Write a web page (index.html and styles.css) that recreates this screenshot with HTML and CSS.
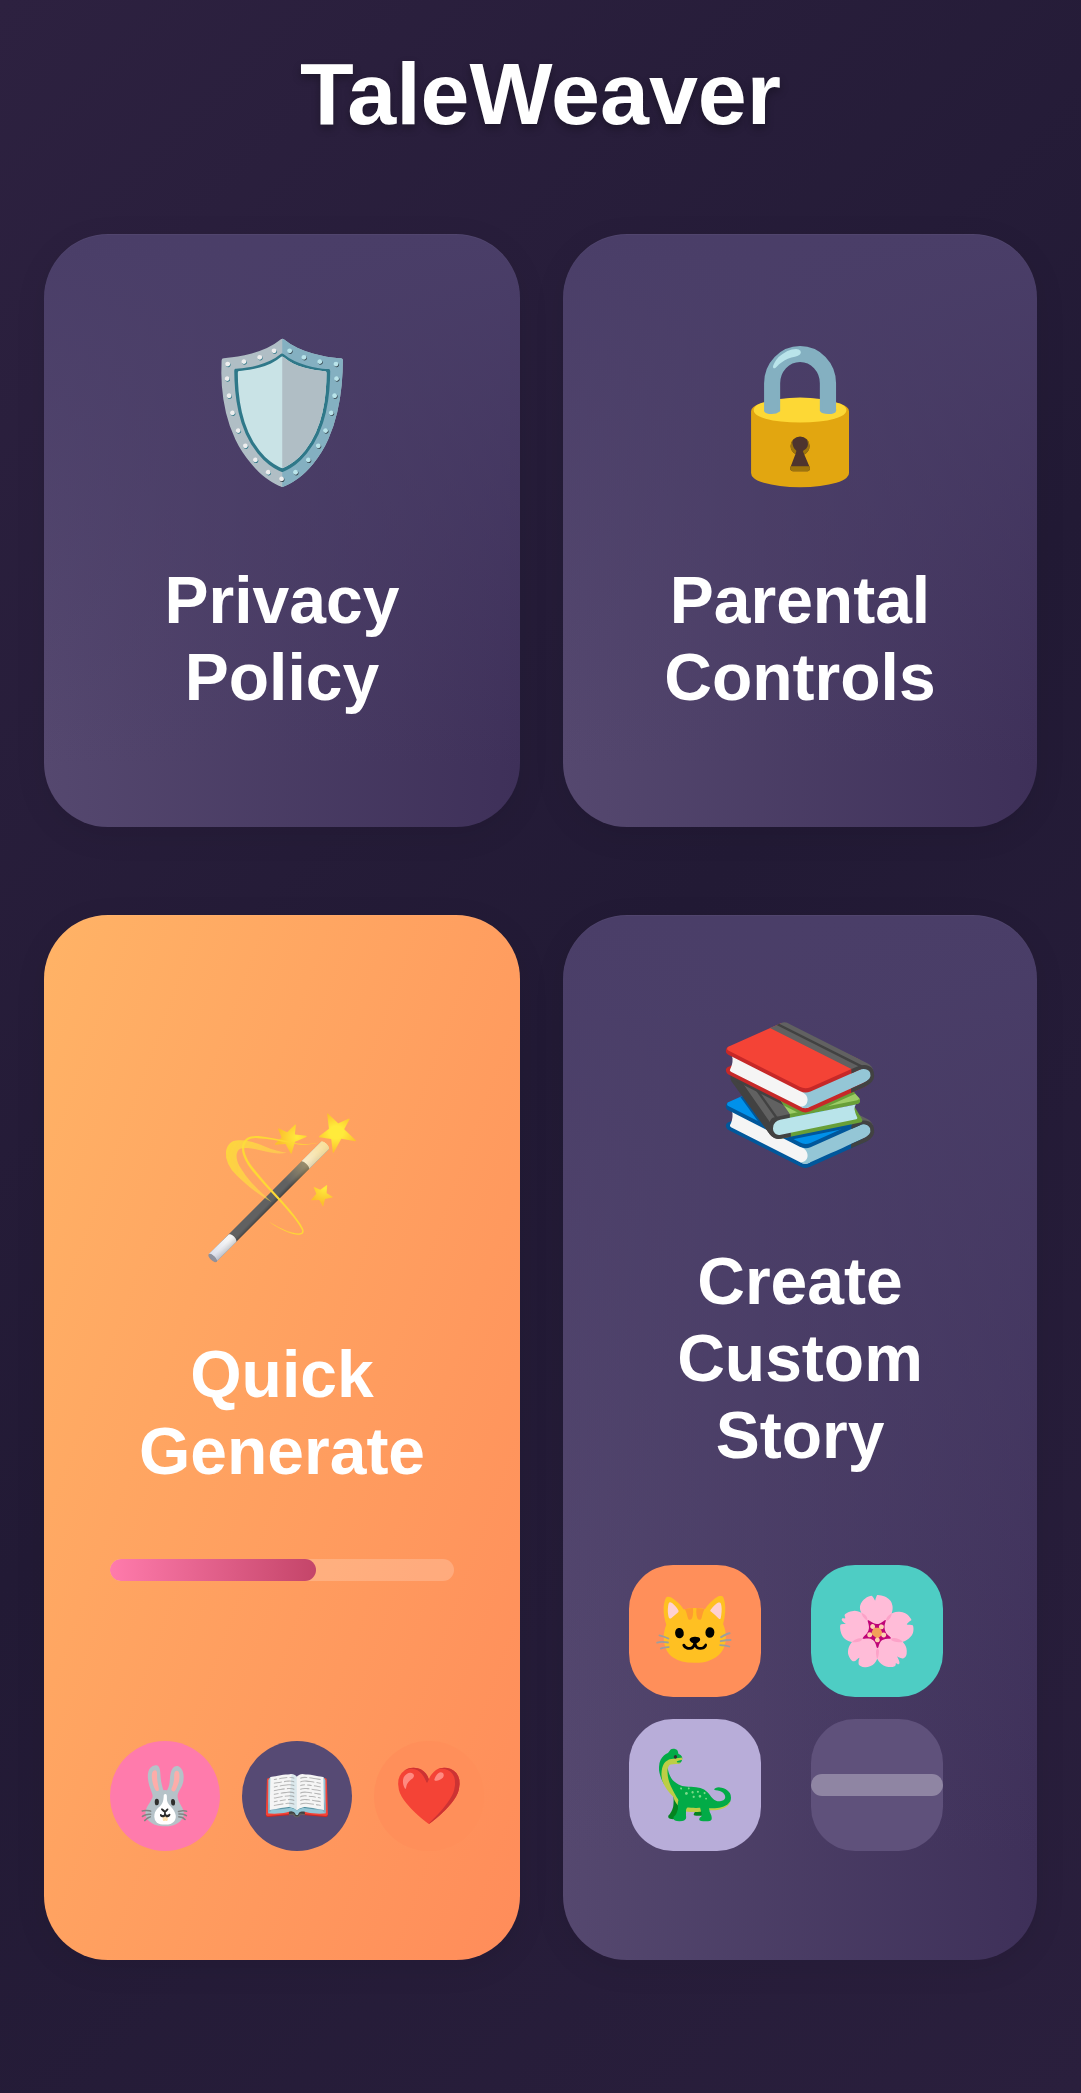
FILE: index.html
```html
<!DOCTYPE html>
<html lang="en">
<head>
    <meta charset="UTF-8">
    <title>TaleWeaver</title>
    <link rel="stylesheet" href="styles.css">
</head>
<body>
    <h1 class="app-title">TaleWeaver</h1>
    <div class="menu-grid">
        <div class="card card-short">
            <div class="card-icon">🛡️</div>
            <h2 class="card-title">Privacy<br>Policy</h2>
        </div>
        <div class="card card-short">
            <div class="card-icon">🔒</div>
            <h2 class="card-title">Parental<br>Controls</h2>
        </div>
        <div class="card card-quick">
            <div class="card-icon">🪄</div>
            <h2 class="card-title">Quick<br>Generate</h2>
            <div class="progress"><div class="progress-fill"></div></div>
            <div class="bubbles">
                <div class="bubble bubble-pink">🐰</div>
                <div class="bubble bubble-purple">📖</div>
                <div class="bubble bubble-orange">❤️</div>
            </div>
        </div>
        <div class="card">
            <div class="card-icon">📚</div>
            <h2 class="card-title">Create<br>Custom<br>Story</h2>
            <div class="tiles">
                <div class="tile tile-orange">🐱</div>
                <div class="tile tile-teal">🌸</div>
                <div class="tile tile-lilac">🦕</div>
                <div class="tile tile-empty"><div class="tile-bar"></div></div>
            </div>
        </div>
    </div>
</body>
</html>
```

FILE: styles.css
```css
/* General Reset */
* {
    margin: 0;
    padding: 0;
    box-sizing: border-box;
}

/* Body Style */
body {
    height: 2093px;
    font-family: 'Liberation Sans', 'Noto Color Emoji', sans-serif;
    background: linear-gradient(135deg, #2d2140, #221a35 50%, #2a1f3d);
    color: #fff;
    overflow: hidden;
    padding: 44px 44px 0;
}

.app-title {
    font-size: 88px;
    line-height: 100px;
    font-weight: 700;
    text-align: center;
    text-shadow: 0 4px 8px rgba(0, 0, 0, 0.3);
    margin-bottom: 90px;
}

/* Cards */
.menu-grid {
    display: grid;
    grid-template-columns: 476px 474px;
    grid-template-rows: 593px 1045px;
    gap: 88px 43px;
}

.card {
    display: flex;
    flex-direction: column;
    align-items: center;
    justify-content: center;
    border-radius: 64px;
    padding: 0 66px;
    background: linear-gradient(to bottom, #4a3e68, rgba(74, 62, 104, 0) 90%),
                linear-gradient(90deg, #55486f, #3e3059);
    box-shadow: 0 8px 32px rgba(0, 0, 0, 0.08), inset 0 1px 0 rgba(255, 255, 255, 0.04);
}

.card-short {
    padding-bottom: 3px;
}

.card-quick {
    justify-content: flex-end;
    padding-bottom: 109px;
    background: linear-gradient(110deg, #ffb366, #ff8c5a);
}

.card-icon {
    font-size: 135px;
    line-height: 139px;
    margin-bottom: 80px;
}

.card-quick .card-icon {
    line-height: 142px;
    margin-bottom: 77px;
}

.card-title {
    font-size: 66px;
    line-height: 77px;
    font-weight: 700;
    text-align: center;
}

/* Progress bar */
.progress {
    width: 344px;
    height: 22px;
    border-radius: 11px;
    background: rgba(255, 255, 255, 0.2);
    margin-top: 69px;
    align-self: flex-start;
    overflow: hidden;
}

.progress-fill {
    width: 60%;
    height: 100%;
    border-radius: 11px;
    background: linear-gradient(90deg, #ff7bac, #c44569);
}

/* Round icons */
.bubbles {
    display: flex;
    gap: 22px;
    align-self: flex-start;
    margin-top: 160px;
}

.bubble {
    flex: none;
    width: 110px;
    height: 110px;
    border-radius: 50%;
    font-size: 56px;
    display: flex;
    align-items: center;
    justify-content: center;
}

.bubble-pink { background: #ff7bac; }
.bubble-purple { background: #564a74; }
.bubble-orange { background: #ff8f5a; }

/* Square icons */
.tiles {
    display: grid;
    grid-template-columns: 132px 132px;
    grid-auto-rows: 132px;
    gap: 22px 50px;
    align-self: flex-start;
    margin-top: 91px;
}

.tile {
    border-radius: 44px;
    font-size: 67px;
    display: flex;
    align-items: center;
    justify-content: center;
}

.tile-orange { background: #ff8f5a; }
.tile-teal { background: #4ecdc4; }
.tile-lilac { background: #b8add9; }
.tile-empty { background: #5f517b; }

.tile-bar {
    width: 100%;
    height: 22px;
    border-radius: 11px;
    background: rgba(255, 255, 255, 0.3);
}
```
